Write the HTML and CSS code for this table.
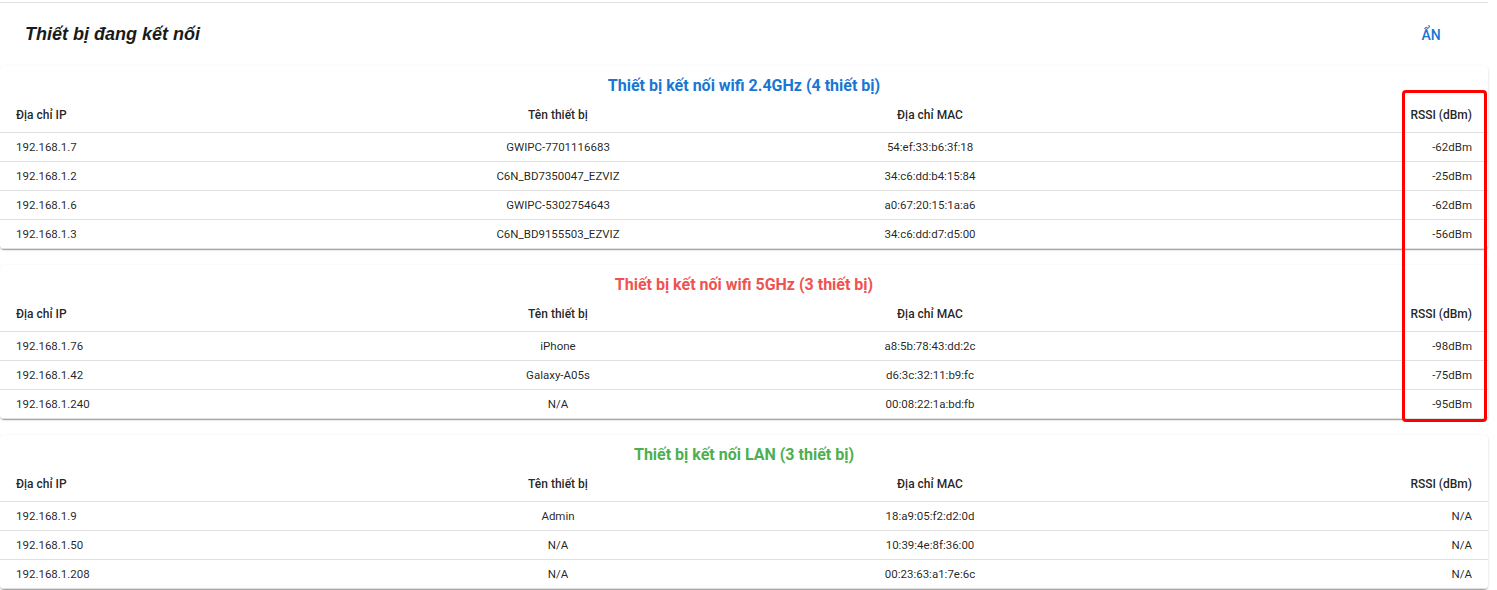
FILE: index.html
```html
<!DOCTYPE html>
<html lang="vi">
<head>
<meta charset="utf-8">
<title>Thiết bị đang kết nối</title>
<link rel="stylesheet" href="styles.css">
</head>
<body>
<div class="page">
  <div class="header">
    <h1 class="title">Thiết bị đang kết nối</h1>
    <button class="hide-btn">Ẩn</button>
  </div>

  <section class="card">
    <h2 class="card-title blue">Thiết bị kết nối wifi 2.4GHz (4 thiết bị)</h2>
    <table class="devices">
      <thead><tr><th class="c-ip">Địa chỉ IP</th><th class="c-mid">Tên thiết bị</th><th class="c-mid">Địa chỉ MAC</th><th class="c-right">RSSI (dBm)</th></tr></thead>
      <tbody>
        <tr><td class="c-ip">192.168.1.7</td><td class="c-mid">GWIPC-7701116683</td><td class="c-mid">54:ef:33:b6:3f:18</td><td class="c-right">-62dBm</td></tr>
        <tr><td class="c-ip">192.168.1.2</td><td class="c-mid">C6N_BD7350047_EZVIZ</td><td class="c-mid">34:c6:dd:b4:15:84</td><td class="c-right">-25dBm</td></tr>
        <tr><td class="c-ip">192.168.1.6</td><td class="c-mid">GWIPC-5302754643</td><td class="c-mid">a0:67:20:15:1a:a6</td><td class="c-right">-62dBm</td></tr>
        <tr><td class="c-ip">192.168.1.3</td><td class="c-mid">C6N_BD9155503_EZVIZ</td><td class="c-mid">34:c6:dd:d7:d5:00</td><td class="c-right">-56dBm</td></tr>
      </tbody>
    </table>
  </section>

  <section class="card">
    <h2 class="card-title red">Thiết bị kết nối wifi 5GHz (3 thiết bị)</h2>
    <table class="devices">
      <thead><tr><th class="c-ip">Địa chỉ IP</th><th class="c-mid">Tên thiết bị</th><th class="c-mid">Địa chỉ MAC</th><th class="c-right">RSSI (dBm)</th></tr></thead>
      <tbody>
        <tr><td class="c-ip">192.168.1.76</td><td class="c-mid">iPhone</td><td class="c-mid">a8:5b:78:43:dd:2c</td><td class="c-right">-98dBm</td></tr>
        <tr><td class="c-ip">192.168.1.42</td><td class="c-mid">Galaxy-A05s</td><td class="c-mid">d6:3c:32:11:b9:fc</td><td class="c-right">-75dBm</td></tr>
        <tr><td class="c-ip">192.168.1.240</td><td class="c-mid">N/A</td><td class="c-mid">00:08:22:1a:bd:fb</td><td class="c-right">-95dBm</td></tr>
      </tbody>
    </table>
  </section>

  <section class="card">
    <h2 class="card-title green">Thiết bị kết nối LAN (3 thiết bị)</h2>
    <table class="devices">
      <thead><tr><th class="c-ip">Địa chỉ IP</th><th class="c-mid">Tên thiết bị</th><th class="c-mid">Địa chỉ MAC</th><th class="c-right">RSSI (dBm)</th></tr></thead>
      <tbody>
        <tr><td class="c-ip">192.168.1.9</td><td class="c-mid">Admin</td><td class="c-mid">18:a9:05:f2:d2:0d</td><td class="c-right">N/A</td></tr>
        <tr><td class="c-ip">192.168.1.50</td><td class="c-mid">N/A</td><td class="c-mid">10:39:4e:8f:36:00</td><td class="c-right">N/A</td></tr>
        <tr><td class="c-ip">192.168.1.208</td><td class="c-mid">N/A</td><td class="c-mid">00:23:63:a1:7e:6c</td><td class="c-right">N/A</td></tr>
      </tbody>
    </table>
  </section>

  <div class="highlight"></div>
</div>
</body>
</html>
```

FILE: styles.css
```css
html, body {
  margin: 0;
  padding: 0;
  background: #ffffff;
}

body {
  font-family: Roboto, "Liberation Sans", Arial, sans-serif;
  color: rgba(0, 0, 0, 0.87);
}

.page {
  position: relative;
  width: 1488px;
  margin-top: 2px;
  border-top: 1px solid #e0e0e0;
}

.header {
  display: flex;
  align-items: center;
  justify-content: space-between;
  height: 63px;
  padding: 0 25px;
}

.title {
  margin: 0;
  font-family: "Liberation Sans", Arial, sans-serif;
  font-size: 18px;
  font-weight: 700;
  font-style: italic;
  color: #1a1a1a;
}

.hide-btn {
  min-width: 64px;
  padding: 6px 8px;
  border: 0;
  background: transparent;
  font-family: Roboto, "Liberation Sans", Arial, sans-serif;
  font-size: 14px;
  font-weight: 500;
  line-height: 20px;
  text-transform: uppercase;
  color: #1976d2;
  cursor: pointer;
}

.card {
  background: #ffffff;
  border-radius: 4px;
  box-shadow: 0 2px 1px -1px rgba(0, 0, 0, 0.2), 0 1px 1px 0 rgba(0, 0, 0, 0.14), 0 1px 3px 0 rgba(0, 0, 0, 0.12);
  margin-bottom: 16px;
  overflow: hidden;
}

.card-title {
  margin: 0;
  padding: 10px 0 4px;
  font-size: 16px;
  line-height: 20px;
  font-weight: 700;
  text-align: center;
}

.blue { color: #1976d2; }
.red { color: #ef5350; }
.green { color: #4caf50; }

.devices {
  width: 100%;
  border-collapse: collapse;
  table-layout: fixed;
  font-size: 11.5px;
}

.devices th,
.devices td {
  width: 25%;
  border-bottom: 1px solid #e0e0e0;
  padding: 8px 16px;
  line-height: 12px;
}

.devices th {
  font-size: 12px;
  font-weight: 500;
  padding-top: 9px;
  padding-bottom: 10px;
  line-height: 13px;
}

.c-ip { text-align: left; }
.c-mid { text-align: center; }
.c-right { text-align: right; }

.highlight {
  position: absolute;
  left: 1402px;
  top: 87px;
  width: 79px;
  height: 326px;
  border: 3px solid #ff0000;
  border-radius: 4px;
  pointer-events: none;
}
```
